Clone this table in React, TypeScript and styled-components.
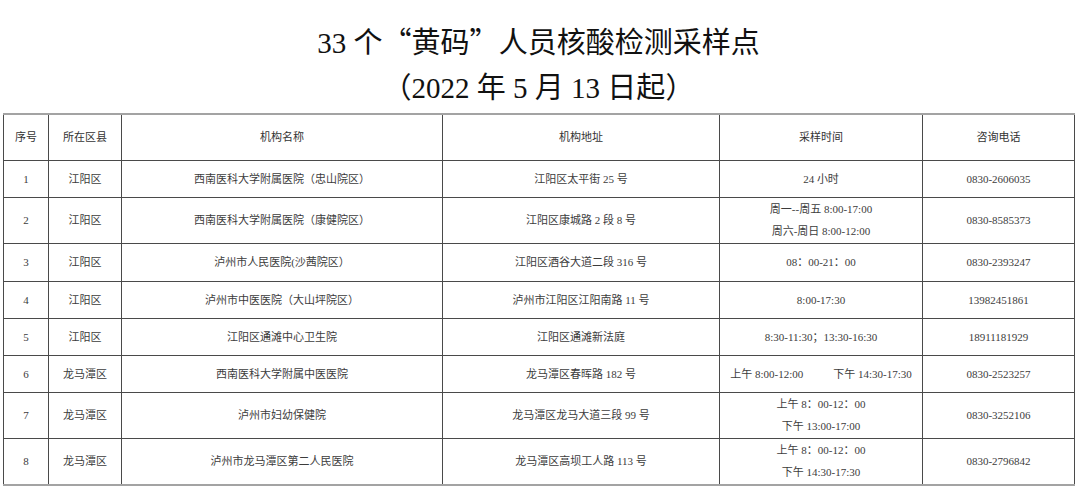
import React from "react";
import styled, { createGlobalStyle } from "styled-components";

const Global = createGlobalStyle`
  html, body {
    margin: 0;
    padding: 0;
    background: #ffffff;
  }
  body {
    font-family: "Liberation Serif", "Noto Sans CJK SC", serif;
    color: #222;
  }
`;

const Page = styled.div`
  width: 1080px;
  height: 487px;
  overflow: hidden;
  padding: 21px 6px 0 3px;
  box-sizing: border-box;
`;

const Title = styled.h1`
  margin: 0;
  height: 45px;
  font-family: "Liberation Serif", "Noto Sans CJK SC", serif;
  font-weight: 400;
  font-size: 29px;
  line-height: 45px;
  text-align: center;
  color: #111;
`;

const Cjk = styled.span`
  font-family: "Noto Sans CJK SC", sans-serif;
  line-height: 1;
`;

const Table = styled.table`
  margin-top: 2px;
  width: 1071px;
  border-collapse: collapse;
  table-layout: fixed;
  border-top: 2px solid #a3a3a3;
  border-bottom: 2px solid #a3a3a3;
  border-left: 1px solid #555;
  border-right: 1px solid #555;
`;

const Row = styled.tr<{ $h: number }>`
  height: ${(p) => p.$h}px;
`;

const Cell = styled.td`
  border: 1px solid #4a4a4a;
  padding: 0 4px;
  text-align: center;
  vertical-align: middle;
  font-family: "Liberation Serif", "Noto Sans CJK SC", serif;
  font-size: 11px;
  line-height: 20px;
  color: #3c3c3c;
  white-space: nowrap;
`;

const HeadCell = styled(Cell).attrs({ as: "th" })`
  font-weight: 400;
  color: #333;
`;

const Line = styled.div`
  line-height: 22px;
`;

const Gap = styled.span`
  display: inline-block;
  width: 30px;
`;

type Item = {
  no: string;
  area: string;
  name: string;
  addr: string;
  time: React.ReactNode;
  phone: string;
  h: number;
};

const rows: Item[] = [
  { no: "1", area: "江阳区", name: "西南医科大学附属医院（忠山院区）", addr: "江阳区太平街 25 号", time: "24 小时", phone: "0830-2606035", h: 37 },
  {
    no: "2",
    area: "江阳区",
    name: "西南医科大学附属医院（康健院区）",
    addr: "江阳区康城路 2 段 8 号",
    time: (
      <>
        <Line>周一--周五 8:00-17:00</Line>
        <Line>周六-周日 8:00-12:00</Line>
      </>
    ),
    phone: "0830-8585373",
    h: 46,
  },
  { no: "3", area: "江阳区", name: "泸州市人民医院(沙茜院区）", addr: "江阳区酒谷大道二段 316 号", time: "08：00-21：00", phone: "0830-2393247", h: 38 },
  { no: "4", area: "江阳区", name: "泸州市中医医院（大山坪院区）", addr: "泸州市江阳区江阳南路 11 号", time: "8:00-17:30", phone: "13982451861", h: 37 },
  { no: "5", area: "江阳区", name: "江阳区通滩中心卫生院", addr: "江阳区通滩新法庭", time: "8:30-11:30；13:30-16:30", phone: "18911181929", h: 37 },
  {
    no: "6",
    area: "龙马潭区",
    name: "西南医科大学附属中医医院",
    addr: "龙马潭区春晖路 182 号",
    time: (
      <>
        上午 8:00-12:00
        <Gap />
        下午 14:30-17:30
      </>
    ),
    phone: "0830-2523257",
    h: 37,
  },
  {
    no: "7",
    area: "龙马潭区",
    name: "泸州市妇幼保健院",
    addr: "龙马潭区龙马大道三段 99 号",
    time: (
      <>
        <Line>上午 8：00-12：00</Line>
        <Line>下午 13:00-17:00</Line>
      </>
    ),
    phone: "0830-3252106",
    h: 46,
  },
  {
    no: "8",
    area: "龙马潭区",
    name: "泸州市龙马潭区第二人民医院",
    addr: "龙马潭区高坝工人路 113 号",
    time: (
      <>
        <Line>上午 8：00-12：00</Line>
        <Line>下午 14:30-17:30</Line>
      </>
    ),
    phone: "0830-2796842",
    h: 47,
  },
];

const widths = [45, 73, 321, 277, 203, 152];
const heads = ["序号", "所在区县", "机构名称", "机构地址", "采样时间", "咨询电话"];

export default function App() {
  return (
    <>
      <Global />
      <Page>
        <Title>
          33 个<Cjk>“黄码”</Cjk>人员核酸检测采样点
        </Title>
        <Title>
          <Cjk>（</Cjk>2022 年 5 月 13 日起<Cjk>）</Cjk>
        </Title>
        <Table>
          <colgroup>
            {widths.map((w, i) => (
              <col key={i} style={{ width: w }} />
            ))}
          </colgroup>
          <thead>
            <Row $h={46}>
              {heads.map((h) => (
                <HeadCell key={h}>{h}</HeadCell>
              ))}
            </Row>
          </thead>
          <tbody>
            {rows.map((r) => (
              <Row key={r.no} $h={r.h}>
                <Cell>{r.no}</Cell>
                <Cell>{r.area}</Cell>
                <Cell>{r.name}</Cell>
                <Cell>{r.addr}</Cell>
                <Cell>{r.time}</Cell>
                <Cell>{r.phone}</Cell>
              </Row>
            ))}
          </tbody>
        </Table>
      </Page>
    </>
  );
}
